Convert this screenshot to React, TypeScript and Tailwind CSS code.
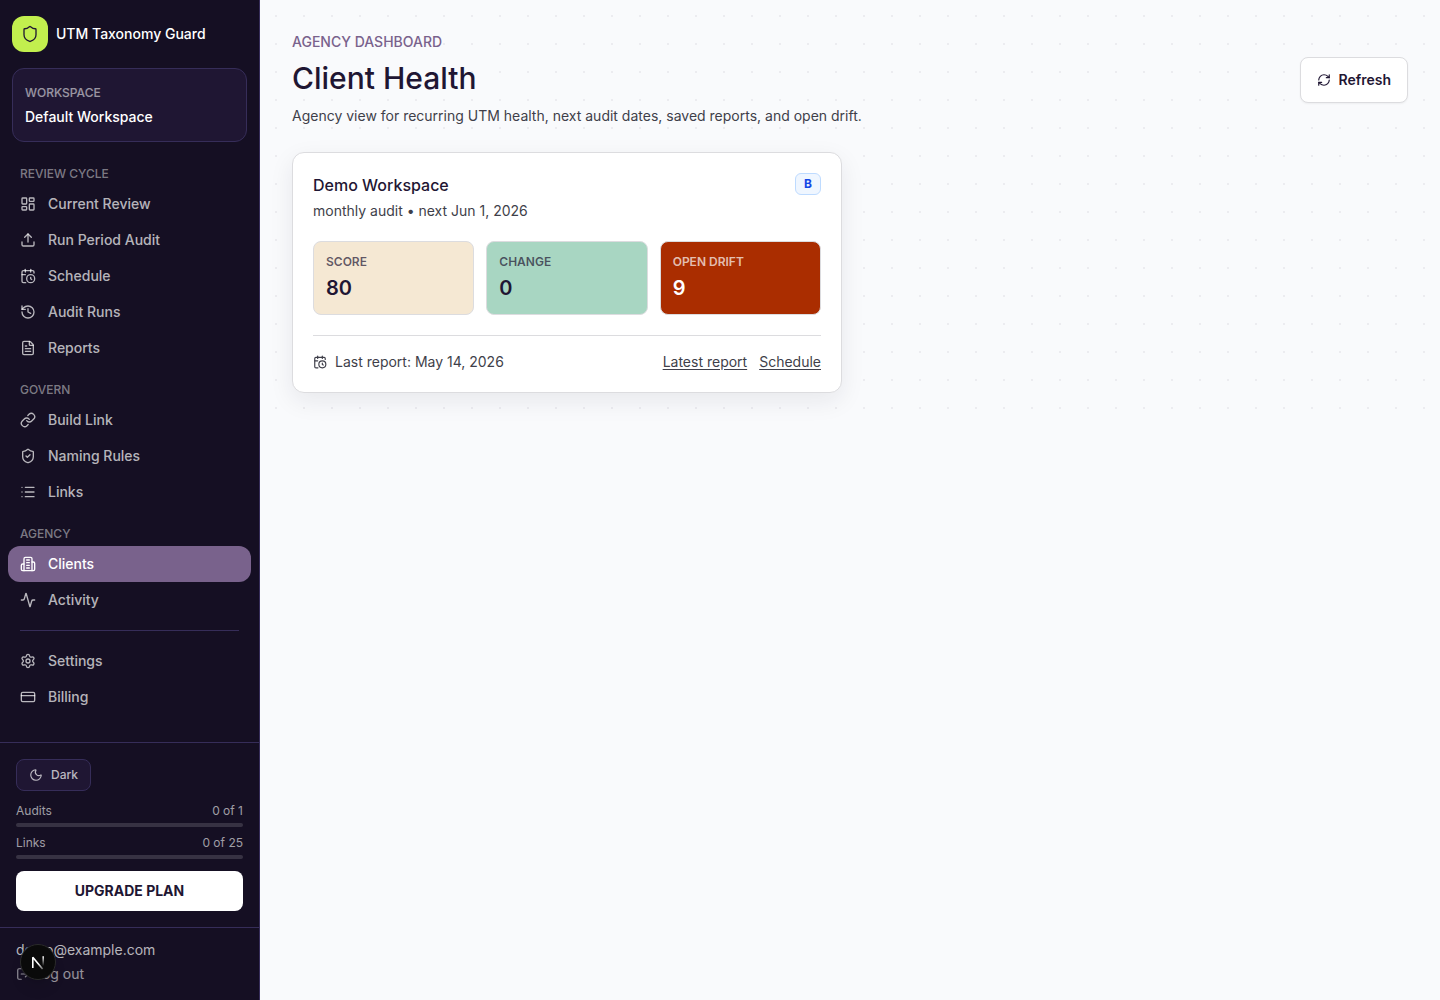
import React from 'react';
import {
  Activity,
  CalendarClock,
  CreditCard,
  FileText,
  History,
  LayoutDashboard,
  Link,
  List,
  LogOut,
  Moon,
  RefreshCw,
  Settings,
  Shield,
  ShieldCheck,
  Upload,
} from 'lucide-react';

interface NavItem {
  label: string;
  icon: React.ElementType;
  active?: boolean;
}

interface NavSection {
  title: string;
  items: NavItem[];
}

const OfficeIcon: React.FC<{ className?: string }> = ({ className }) => (
  <svg
    viewBox="0 0 24 24"
    fill="none"
    stroke="currentColor"
    strokeWidth="2"
    strokeLinecap="round"
    strokeLinejoin="round"
    className={className}
  >
    <path d="M6 22V4a2 2 0 0 1 2-2h8a2 2 0 0 1 2 2v18Z" />
    <path d="M6 12H4a2 2 0 0 0-2 2v6a2 2 0 0 0 2 2h2" />
    <path d="M18 9h2a2 2 0 0 1 2 2v9a2 2 0 0 1-2 2h-2" />
    <path d="M10 6h4" />
    <path d="M10 10h4" />
    <path d="M10 14h4" />
    <path d="M10 18h4" />
  </svg>
);

const sections: NavSection[] = [
  {
    title: 'Review cycle',
    items: [
      { label: 'Current Review', icon: LayoutDashboard },
      { label: 'Run Period Audit', icon: Upload },
      { label: 'Schedule', icon: CalendarClock },
      { label: 'Audit Runs', icon: History },
      { label: 'Reports', icon: FileText },
    ],
  },
  {
    title: 'Govern',
    items: [
      { label: 'Build Link', icon: Link },
      { label: 'Naming Rules', icon: ShieldCheck },
      { label: 'Links', icon: List },
    ],
  },
  {
    title: 'Agency',
    items: [
      { label: 'Clients', icon: OfficeIcon, active: true },
      { label: 'Activity', icon: Activity },
    ],
  },
];

const accountItems: NavItem[] = [
  { label: 'Settings', icon: Settings },
  { label: 'Billing', icon: CreditCard },
];

const usage = [
  { label: 'Audits', used: 0, limit: 1 },
  { label: 'Links', used: 0, limit: 25 },
];

const stats = [
  { label: 'Score', value: 80, box: 'bg-[#f5e8d3] text-[#1f1633]', caption: 'text-[#1f1633]/70' },
  { label: 'Change', value: 0, box: 'bg-[#a8d6c2] text-[#1f1633]', caption: 'text-[#1f1633]/70' },
  { label: 'Open drift', value: 9, box: 'bg-[#aa2d00] text-white', caption: 'text-white/70' },
];

const NavLink: React.FC<{ item: NavItem }> = ({ item }) => {
  const Icon = item.icon;

  return (
    <a
      href="#"
      aria-current={item.active ? 'page' : undefined}
      className={`flex h-9 items-center gap-3 rounded-xl px-3 text-sm font-medium ${
        item.active ? 'bg-[#79628c] text-white' : 'text-white/70 hover:text-white'
      }`}
    >
      <Icon className="h-4 w-4" />
      <span>{item.label}</span>
    </a>
  );
};

const Sidebar: React.FC = () => (
  <aside className="flex w-65 shrink-0 flex-col border-r border-[#362d59] bg-[#150f23]">
    <div className="flex items-center gap-2 px-3 pt-4 pb-4">
      <div className="flex h-9 w-9 items-center justify-center rounded-xl bg-[#c2ef4e] text-[#1f1633]">
        <Shield className="h-4.5 w-4.5" strokeWidth={1.75} />
      </div>
      <span className="text-sm font-medium text-white">UTM Taxonomy Guard</span>
    </div>

    <div className="mx-3 rounded-xl border border-[#362d59] bg-[#1f1633] px-3 py-3">
      <p className="text-xs leading-6 font-medium text-white/55 uppercase">Workspace</p>
      <p className="text-sm leading-6 font-medium text-white">Default Workspace</p>
    </div>

    <nav className="flex flex-col gap-4 px-2 pt-6">
      {sections.map((section) => (
        <div key={section.title}>
          <h2 className="mb-1 px-3 text-xs font-medium text-white/45 uppercase">{section.title}</h2>
          {section.items.map((item) => (
            <NavLink key={item.label} item={item} />
          ))}
        </div>
      ))}
    </nav>
    <div className="px-2">
      <hr className="mx-3 my-3 border-[#362d59]" />
      {accountItems.map((item) => (
        <NavLink key={item.label} item={item} />
      ))}
    </div>

    <div className="mt-auto border-t border-[#362d59] p-4">
      <button
        type="button"
        className="flex h-8 items-center gap-2 rounded-lg border border-[#362d59] bg-[#1f1633] px-3 text-xs font-medium text-white/70"
      >
        <Moon className="h-3.5 w-3.5" />
        Dark
      </button>
      <div className="mt-3 flex flex-col gap-2">
        {usage.map((row) => (
          <div key={row.label}>
            <div className="flex justify-between text-xs text-white/60">
              <span>{row.label}</span>
              <span>
                {row.used} of {row.limit}
              </span>
            </div>
            <div className="mt-1 h-1 overflow-hidden rounded-full bg-white/15">
              <div className="h-full bg-[#c2ef4e]" style={{ width: `${(row.used / row.limit) * 100}%` }} />
            </div>
          </div>
        ))}
      </div>
      <button type="button" className="mt-3 h-10 w-full rounded-lg bg-white text-sm font-bold text-[#1f1633] uppercase">
        Upgrade plan
      </button>
    </div>

    <div className="border-t border-[#362d59] px-4 pt-3 pb-4 text-sm">
      <p className="text-white/70">demo@example.com</p>
      <button type="button" className="mt-1 flex items-center gap-1 text-white/55">
        <LogOut className="h-3.5 w-3.5" />
        Log out
      </button>
    </div>
  </aside>
);

const ClientCard: React.FC = () => (
  <article className="rounded-xl border border-[#dcdcdf] bg-white p-5 shadow-[0_8px_24px_rgba(31,22,51,0.08)]">
    <div className="flex items-start justify-between">
      <div>
        <h2 className="text-base font-medium text-[#1f1633]">Demo Workspace</h2>
        <p className="mt-1 text-sm text-[#3f3f4a]">monthly audit • next Jun 1, 2026</p>
      </div>
      <span className="rounded-md border border-[#bedbff] bg-[#eff6ff] px-2 py-0.5 text-xs font-bold text-[#1447e6]">
        B
      </span>
    </div>

    <div className="mt-5 grid grid-cols-3 gap-3">
      {stats.map((stat) => (
        <div key={stat.label} className={`rounded-lg border border-[#dcdcdf] p-3 ${stat.box}`}>
          <p className={`text-xs font-semibold uppercase ${stat.caption}`}>{stat.label}</p>
          <p className="mt-1 text-xl font-semibold">{stat.value}</p>
        </div>
      ))}
    </div>

    <div className="mt-5 flex items-center justify-between border-t border-[#dcdcdf] pt-4 text-sm text-[#3f3f4a]">
      <span className="flex items-center gap-2">
        <CalendarClock className="h-3.5 w-3.5" />
        Last report: May 14, 2026
      </span>
      <span className="flex gap-3">
        <a href="#" className="underline underline-offset-2">Latest report</a>
        <a href="#" className="underline underline-offset-2">Schedule</a>
      </span>
    </div>
  </article>
);

const DevBadge: React.FC = () => (
  <button
    type="button"
    aria-label="Open developer tools"
    className="fixed bottom-5 left-5 flex h-9 w-9 items-center justify-center rounded-full border border-[#2a2a2a] bg-[#0a0a0a] shadow-lg"
  >
    <svg width="36" height="36" viewBox="0 0 36 36" fill="none" className="shrink-0">
      <defs>
        <linearGradient id="stem" x1="0" y1="12" x2="0" y2="22" gradientUnits="userSpaceOnUse">
          <stop stopColor="white" />
          <stop offset="1" stopColor="white" stopOpacity="0" />
        </linearGradient>
        <linearGradient id="slash" x1="19" y1="19" x2="24" y2="25" gradientUnits="userSpaceOnUse">
          <stop stopColor="white" />
          <stop offset="1" stopColor="white" stopOpacity="0.3" />
        </linearGradient>
      </defs>
      <path d="M12.8 24V13.2L22.6 25" stroke="url(#slash)" strokeWidth="1.6" strokeLinejoin="bevel" />
      <path d="M23.2 12.2V22" stroke="url(#stem)" strokeWidth="1.6" />
    </svg>
  </button>
);

const App: React.FC = () => {
  return (
    <div className="flex min-h-screen bg-[#f9fafc] font-['Inter',sans-serif]">
      <Sidebar />
      <main className="min-w-0 flex-1">
        <div className="bg-[radial-gradient(circle_at_16px_16px,#ececf0_1px,transparent_1px)] bg-size-[28px_28px] p-8">
          <header className="flex items-center justify-between">
            <div>
              <p className="text-sm font-medium text-[#79628c] uppercase">Agency dashboard</p>
              <h1 className="mt-2 text-3xl font-medium text-[#1f1633]">Client Health</h1>
              <p className="mt-2 text-sm leading-6 text-[#3f3f4a]">
                Agency view for recurring UTM health, next audit dates, saved reports, and open drift.
              </p>
            </div>
            <button
              type="button"
              className="flex items-center gap-2 rounded-lg border border-[#dcdcdf] bg-white px-4 py-3 text-sm font-semibold text-[#1f1633] shadow-xs"
            >
              <RefreshCw className="h-3.5 w-3.5" />
              Refresh
            </button>
          </header>

          <div className="mt-6 grid gap-4 lg:grid-cols-2">
            <ClientCard />
          </div>
        </div>
      </main>
      <DevBadge />
    </div>
  );
};

export default App;
